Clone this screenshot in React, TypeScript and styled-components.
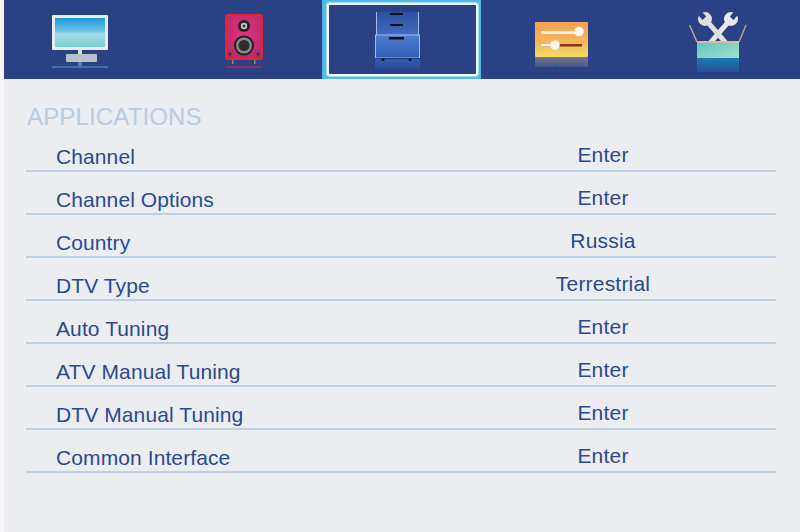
import styled, { createGlobalStyle } from "styled-components";

const GlobalStyle = createGlobalStyle`
  html, body {
    margin: 0;
    padding: 0;
    background: #f6f6f8;
  }
`;

const Screen = styled.div`
  width: 796px;
  height: 532px;
  margin-left: 4px;
  background: #ebedf1;
  font-family: "Liberation Sans", Arial, sans-serif;
  overflow: hidden;
`;

const TopBar = styled.div`
  height: 79px;
  background: #2b4186;
  display: grid;
  grid-template-columns: 318px 159px 319px;
`;

const IconRow = styled.div<{ $left: number; $gap: number }>`
  display: flex;
  align-items: flex-start;
  padding: 10px 0 0 ${({ $left }) => $left}px;
  gap: ${({ $gap }) => $gap}px;
`;

const ActiveTab = styled.div`
  background: #4fb8e6;
  padding: 3px 3px 3px 5px;
  display: flex;
`;

const ActiveInner = styled.div`
  flex: 1;
  border: 2px solid #f4fafd;
  border-radius: 3px;
  background: #2b4186;
  display: flex;
  justify-content: center;
  padding: 7px 10px 0 0;
  box-shadow: 0 0 1px 1px #a9dff5;
`;

const Body = styled.div`
  padding: 26px 24px 0 22px;
`;

const Heading = styled.div`
  color: #b7cbe3;
  font-size: 24px;
  line-height: 24px;
  letter-spacing: 0.15px;
  padding-left: 1px;
`;

const Row = styled.div`
  height: 43px;
  box-sizing: border-box;
  border-bottom: 2px solid #bccfe6;
  display: grid;
  grid-template-columns: 470px 214px;
  align-items: end;
  color: #2b4a8e;
  font-size: 21px;
`;

const Label = styled.div`
  padding-left: 30px;
  line-height: 23px;
  padding-bottom: 2px;
  letter-spacing: 0.1px;
`;

const Value = styled.div`
  text-align: center;
  line-height: 23px;
  padding-bottom: 4px;
  letter-spacing: 0.2px;
`;

const MonitorIcon = () => (
  <svg width="58" height="60" viewBox="0 0 58 60">
    <defs>
      <linearGradient id="screen" x1="0" y1="0" x2="0" y2="1">
        <stop offset="0" stopColor="#1f98d6" />
        <stop offset="0.45" stopColor="#6cc4e6" />
        <stop offset="0.55" stopColor="#a6d9e6" />
        <stop offset="1" stopColor="#78d0cc" />
      </linearGradient>
    </defs>
    <rect x="0" y="5" width="56" height="35" fill="#e8ecee" rx="1" />
    <rect x="3" y="8" width="50" height="29" fill="url(#screen)" />
    <rect x="26" y="40" width="4" height="5" fill="#d7dce0" />
    <rect x="14" y="44" width="31" height="8" fill="#b9bfcb" rx="1" />
    <rect x="26" y="52" width="4" height="4" fill="#5a76a5" />
    <rect x="0" y="56" width="56" height="2" fill="#3f70a8" />
  </svg>
);

const SpeakerIcon = () => (
  <svg width="38" height="60" viewBox="0 0 38 60">
    <defs>
      <radialGradient id="box" cx="0.5" cy="0.4" r="0.7">
        <stop offset="0" stopColor="#e83080" />
        <stop offset="1" stopColor="#b02a62" />
      </radialGradient>
    </defs>
    <rect x="1" y="5" width="36" height="44" rx="2" fill="url(#box)" stroke="#e4242f" strokeWidth="2" />
    <circle cx="19" cy="16" r="6" fill="#222" />
    <circle cx="19" cy="16" r="3.2" fill="#c8c8c8" />
    <circle cx="19" cy="16" r="1.5" fill="#333" />
    <circle cx="19" cy="35.5" r="10" fill="#222" />
    <circle cx="19" cy="35.5" r="8" fill="#8a8a8a" />
    <circle cx="19" cy="35.5" r="5.5" fill="#2c2c2c" />
    <circle cx="5" cy="44" r="1.5" fill="#333" />
    <circle cx="33" cy="44" r="1.5" fill="#333" />
    <rect x="7" y="50" width="1.5" height="4" fill="#8a8a70" />
    <rect x="29" y="50" width="1.5" height="4" fill="#8a8a70" />
    <rect x="1" y="56" width="36" height="2" fill="#8a3060" />
  </svg>
);

const DrawerIcon = () => (
  <svg width="46" height="58" viewBox="0 0 46 58">
    <defs>
      <linearGradient id="upper" x1="0" y1="0" x2="0" y2="1">
        <stop offset="0" stopColor="#2f4f9e" />
        <stop offset="1" stopColor="#3f6cc4" />
      </linearGradient>
      <linearGradient id="drawer" x1="0" y1="0" x2="0" y2="1">
        <stop offset="0" stopColor="#4f7fd0" />
        <stop offset="1" stopColor="#2f5cb4" />
      </linearGradient>
      <linearGradient id="drawerFade" x1="0" y1="0" x2="0" y2="1">
        <stop offset="0" stopColor="#2f62bd" />
        <stop offset="1" stopColor="#2b4590" />
      </linearGradient>
    </defs>
    <rect x="1.5" y="0" width="42" height="23" fill="url(#upper)" />
    <path d="M1.5 0 V23 M43.5 0 V23" stroke="#a6bce0" strokeWidth="1" />
    <rect x="15" y="1" width="13" height="2" fill="#111" />
    <rect x="15" y="12" width="13" height="2" fill="#111" />
    <rect x="0.5" y="23" width="44" height="23" fill="url(#drawer)" stroke="#a6bce0" strokeWidth="1" />
    <rect x="14" y="25" width="15" height="2.5" fill="#111" />
    <rect x="0" y="46" width="45" height="12" fill="url(#drawerFade)" />
    <rect x="0" y="46" width="45" height="1" fill="#1d3a78" />
    <circle cx="8" cy="47.5" r="1.5" fill="#111" />
    <circle cx="35" cy="47.5" r="1.5" fill="#111" />
  </svg>
);

const SliderIcon = () => (
  <svg width="54" height="60" viewBox="0 0 54 60">
    <defs>
      <linearGradient id="panel" x1="0" y1="0" x2="0" y2="1">
        <stop offset="0" stopColor="#f4a050" />
        <stop offset="0.6" stopColor="#f4b85c" />
        <stop offset="1" stopColor="#f3dc62" />
      </linearGradient>
      <linearGradient id="panelFade" x1="0" y1="0" x2="0" y2="1">
        <stop offset="0" stopColor="#77768a" />
        <stop offset="1" stopColor="#46568e" />
      </linearGradient>
    </defs>
    <rect x="0" y="12" width="53" height="35" rx="1" fill="url(#panel)" />
    <rect x="6" y="21" width="41" height="3" rx="1.5" fill="#f5f0e8" />
    <circle cx="44" cy="21.5" r="4.8" fill="#f6f6f6" />
    <rect x="6" y="34" width="41" height="2.5" fill="#8c3420" />
    <rect x="6" y="34" width="14" height="2.5" fill="#f5f0e8" />
    <circle cx="20" cy="35" r="4.8" fill="#f6f6f6" />
    <rect x="0" y="47" width="53" height="10" fill="url(#panelFade)" />
    <path d="M17 57 a3 3 0 0 1 6 0 Z" fill="#2e5da6" />
  </svg>
);

const WRENCH =
  "M-2.5 -6.5 L-2.5 -1 L2.5 -1 L2.5 -6.5 A7 7 0 0 1 2.5 6.5 L2.5 36 L-2.5 36 L-2.5 6.5 A7 7 0 0 1 -2.5 -6.5 Z";

const ToolboxIcon = () => (
  <svg width="58" height="64" viewBox="0 0 58 64">
    <defs>
      <linearGradient id="boxFront" x1="0" y1="0" x2="1" y2="1">
        <stop offset="0" stopColor="#5fc7bf" />
        <stop offset="1" stopColor="#a4dfcf" />
      </linearGradient>
      <linearGradient id="boxFade" x1="0" y1="0" x2="0" y2="1">
        <stop offset="0" stopColor="#1b79b5" />
        <stop offset="1" stopColor="#2a5098" />
      </linearGradient>
    </defs>
    <path d="M0.5 15 L8 32 M57 15 L50 32" stroke="#b5a48c" strokeWidth="1.5" fill="none" />
    <path d={WRENCH} transform="translate(42 9) rotate(41)" fill="#e6e8e9" />
    <path d={WRENCH} transform="translate(16 9) rotate(-41)" fill="#dcdfe0" />
    <rect x="8" y="31" width="42" height="2.5" fill="#e0b89a" />
    <rect x="8" y="33" width="42" height="15" fill="url(#boxFront)" />
    <rect x="8" y="48" width="42" height="14" fill="url(#boxFade)" />
  </svg>
);

const rows = [
  { label: "Channel", value: "Enter" },
  { label: "Channel Options", value: "Enter" },
  { label: "Country", value: "Russia" },
  { label: "DTV Type", value: "Terrestrial" },
  { label: "Auto Tuning", value: "Enter" },
  { label: "ATV Manual Tuning", value: "Enter" },
  { label: "DTV Manual Tuning", value: "Enter" },
  { label: "Common Interface", value: "Enter" },
];

export default function App() {
  return (
    <>
      <GlobalStyle />
      <Screen>
        <TopBar>
          <IconRow $left={48} $gap={115}>
            <MonitorIcon />
            <SpeakerIcon />
          </IconRow>
          <ActiveTab>
            <ActiveInner>
              <DrawerIcon />
            </ActiveInner>
          </ActiveTab>
          <IconRow $left={54} $gap={100}>
            <SliderIcon />
            <ToolboxIcon />
          </IconRow>
        </TopBar>
        <Body>
          <Heading>APPLICATIONS</Heading>
          {rows.map((row) => (
            <Row key={row.label}>
              <Label>{row.label}</Label>
              <Value>{row.value}</Value>
            </Row>
          ))}
        </Body>
      </Screen>
    </>
  );
}
